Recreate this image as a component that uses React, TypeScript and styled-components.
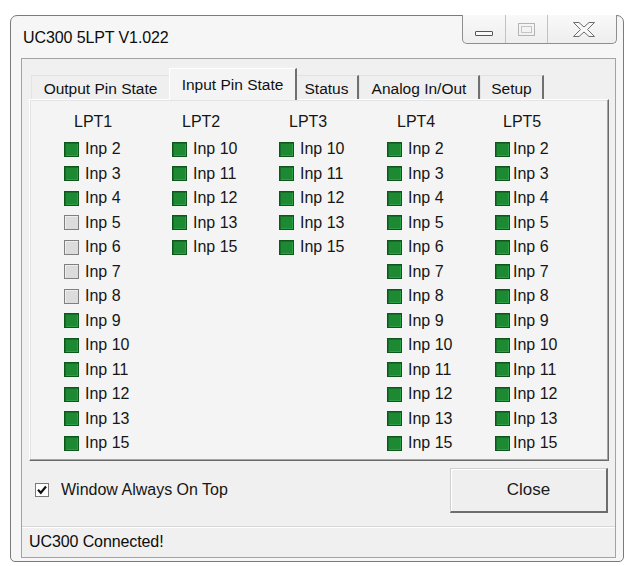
import React from "react";
import styled, { createGlobalStyle } from "styled-components";

const Global = createGlobalStyle`
  html, body {
    margin: 0;
    padding: 0;
    width: 624px;
    height: 566px;
    overflow: hidden;
    background: #ffffff;
  }
  body {
    font-family: "Liberation Sans", Arial, sans-serif;
    color: #111;
  }
`;

const Frame = styled.div`
  margin: 15px 0 0 10px;
  width: 614px;
  height: 547px;
  box-sizing: border-box;
  border: 1px solid #7b7b7b;
  border-radius: 7px 7px 5px 5px;
  background: #f6f6f6;
  padding: 0 0 3px 10px;
  display: flex;
  flex-direction: column;
`;

const TitleBar = styled.div`
  height: 42px;
  display: flex;
  justify-content: space-between;
  align-items: flex-start;
  padding-right: 6px;
`;

const Title = styled.div`
  margin-top: 12px;
  margin-left: 2px;
  font-size: 16px;
  line-height: 20px;
  letter-spacing: -0.1px;
  color: #0c0c0c;
`;

const Caption = styled.div`
  margin-top: -1px;
  height: 29px;
  display: flex;
  box-sizing: border-box;
  border: 1px solid #8e8e8e;
  border-top: none;
  border-radius: 0 0 5px 5px;
  background: linear-gradient(#f9f9f9, #eeeeee);
  overflow: hidden;
`;

const CapButton = styled.div<{ $w: number; $last?: boolean }>`
  width: ${(p) => p.$w}px;
  display: flex;
  align-items: center;
  justify-content: center;
  border-right: ${(p) => (p.$last ? "none" : "1px solid #c2c2c2")};
  box-sizing: border-box;
`;

const MinGlyph = styled.div`
  width: 18px;
  height: 5px;
  margin-top: 9px;
  box-sizing: border-box;
  border: 1px solid #555;
  border-radius: 1px;
  background: #fafafa;
`;

const Client = styled.div`
  width: 595px;
  height: 500px;
  box-sizing: border-box;
  border: 1px solid #a3a3a3;
  background: #f0f0f0;
  display: flex;
  flex-direction: column;
`;

const TabArea = styled.div`
  padding: 9px 6px 0 7px;
`;

const TabStrip = styled.div`
  height: 31px;
  display: flex;
  align-items: flex-end;
  padding-left: 2px;
  position: relative;
  z-index: 1;
`;

const Tab = styled.div<{ $w: number; $active?: boolean }>`
  width: ${(p) => p.$w}px;
  height: ${(p) => (p.$active ? 32 : 24)}px;
  margin: ${(p) => (p.$active ? "0 -2px -1px -2px" : "0")};
  box-sizing: border-box;
  display: flex;
  justify-content: center;
  align-items: center;
  padding-top: ${(p) => (p.$active ? 0 : 2)}px;
  font-size: 15.5px;
  white-space: nowrap;
  color: #111;
  background: ${(p) => (p.$active ? "#f4f4f4" : "#efefef")};
  border-top: 1px solid ${(p) => (p.$active ? "#ffffff" : "#e2e2e2")};
  border-left: 1px solid ${(p) => (p.$active ? "#ffffff" : "#e4e4e4")};
  border-right: 2px solid #707070;
  position: relative;
  z-index: ${(p) => (p.$active ? 2 : 1)};
`;

const Panel = styled.div`
  height: 362px;
  box-sizing: border-box;
  background: #f4f4f4;
  border-top: 1px solid #ffffff;
  border-left: 1px solid #ffffff;
  border-right: 1px solid #6a6a6a;
  border-bottom: 1px solid #6a6a6a;
  box-shadow: inset -1px -1px 0 #a4a4a4, inset 1px 1px 0 #e4e4e4;
  padding: 10px 0 0 34px;
  display: grid;
  grid-template-columns: 108px 107px 108px 108px 1fr;
  align-items: start;
`;

const Column = styled.div`
  display: flex;
  flex-direction: column;
`;

const Header = styled.div<{ $shift: number }>`
  height: 24px;
  line-height: 24px;
  margin-bottom: 3px;
  padding-left: ${(p) => p.$shift}px;
  font-size: 16px;
  color: #161616;
`;

const Row = styled.div<{ $gap: number }>`
  height: 24.5px;
  display: flex;
  align-items: center;
  gap: ${(p) => p.$gap}px;
  font-size: 16px;
  color: #161616;
  white-space: nowrap;
`;

const Led = styled.span<{ $on: boolean }>`
  width: 15px;
  height: 15px;
  box-sizing: border-box;
  flex: none;
  border: 1px solid ${(p) => (p.$on ? "#0e561c" : "#7f7f7f")};
  background: ${(p) => (p.$on ? "#1d8a33" : "#dcdcdc")};
  box-shadow: ${(p) =>
    p.$on
      ? "inset 1px 1px 0 #166f29, inset -1px -1px 0 #2a9f43"
      : "inset 1px 1px 0 #eeeeee"};
`;

const BottomBar = styled.div`
  height: 65px;
  box-sizing: border-box;
  display: flex;
  justify-content: space-between;
  align-items: flex-start;
  padding: 7px 7px 0 13px;
`;

const CheckRow = styled.label`
  margin-top: 13px;
  display: flex;
  align-items: center;
  gap: 12px;
  font-size: 16px;
  color: #161616;
`;

const CheckBox = styled.span`
  width: 14px;
  height: 14px;
  box-sizing: border-box;
  border: 1px solid #7a7a7a;
  background: #ffffff;
  display: flex;
  align-items: center;
  justify-content: center;
`;

const CloseButton = styled.div`
  width: 158px;
  height: 45px;
  box-sizing: border-box;
  display: flex;
  align-items: center;
  justify-content: center;
  font-size: 17px;
  color: #1a1a1a;
  background: #efefef;
  border-top: 1px solid #cfcfcf;
  border-left: 1px solid #cfcfcf;
  border-right: 2px solid #6d6d6d;
  border-bottom: 2px solid #6d6d6d;
  box-shadow: inset 1px 1px 0 #ffffff;
`;

const StatusBar = styled.div`
  height: 31px;
  box-sizing: border-box;
  border-top: 1px solid #d6d6d6;
  box-shadow: inset 0 1px 0 #ffffff;
  display: flex;
  align-items: center;
  padding: 0 0 0 7px;
  font-size: 16px;
  letter-spacing: -0.1px;
  color: #0c0c0c;
`;

type Port = { name: string; pins: [number, boolean][]; shift: number; gap: number };

const on = (list: number[]): [number, boolean][] => list.map((n) => [n, true]);

const ports: Port[] = [
  {
    name: "LPT1",
    shift: 10,
    gap: 6,
    pins: [
      [2, true],
      [3, true],
      [4, true],
      [5, false],
      [6, false],
      [7, false],
      [8, false],
      [9, true],
      [10, true],
      [11, true],
      [12, true],
      [13, true],
      [15, true],
    ],
  },
  { name: "LPT2", shift: 10, gap: 6, pins: on([10, 11, 12, 13, 15]) },
  { name: "LPT3", shift: 10, gap: 6, pins: on([10, 11, 12, 13, 15]) },
  { name: "LPT4", shift: 10, gap: 6, pins: on([2, 3, 4, 5, 6, 7, 8, 9, 10, 11, 12, 13, 15]) },
  { name: "LPT5", shift: 8, gap: 3, pins: on([2, 3, 4, 5, 6, 7, 8, 9, 10, 11, 12, 13, 15]) },
];

const tabs: { label: string; w: number; active?: boolean }[] = [
  { label: "Output Pin State", w: 140 },
  { label: "Input Pin State", w: 128, active: true },
  { label: "Status", w: 64 },
  { label: "Analog In/Out", w: 121 },
  { label: "Setup", w: 64 },
];

export default function App() {
  return (
    <>
      <Global />
      <Frame>
        <TitleBar>
          <Title>UC300 5LPT V1.022</Title>
          <Caption>
            <CapButton $w={43}>
              <MinGlyph />
            </CapButton>
            <CapButton $w={42}>
              <svg width="17" height="13" viewBox="0 0 17 13">
                <rect x="0.5" y="0.5" width="16" height="12" fill="none" stroke="#b4b4b4" />
                <rect x="3.5" y="3.5" width="10" height="6" fill="none" stroke="#c4c4c4" />
              </svg>
            </CapButton>
            <CapButton $w={68} $last>
              <svg width="22" height="15" viewBox="0 0 22 15" style={{ marginLeft: 4 }}>
                <polygon
                  points="0.5,0.5 6,0.5 11,5 16,0.5 21.5,0.5 14.5,7.5 21.5,14.5 16,14.5 11,10 6,14.5 0.5,14.5 7.5,7.5"
                  fill="#f7f7f7"
                  stroke="#6e6e6e"
                  strokeWidth="1"
                  strokeLinejoin="round"
                />
              </svg>
            </CapButton>
          </Caption>
        </TitleBar>
        <Client>
          <TabArea>
            <TabStrip>
              {tabs.map((t) => (
                <Tab key={t.label} $w={t.w} $active={t.active}>
                  {t.label}
                </Tab>
              ))}
            </TabStrip>
            <Panel>
              {ports.map((p) => (
                <Column key={p.name}>
                  <Header $shift={p.shift}>{p.name}</Header>
                  {p.pins.map(([n, lit]) => (
                    <Row key={n} $gap={p.gap}>
                      <Led $on={lit} />
                      <span>Inp {n}</span>
                    </Row>
                  ))}
                </Column>
              ))}
            </Panel>
          </TabArea>
          <BottomBar>
            <CheckRow>
              <CheckBox>
                <svg width="10" height="10" viewBox="0 0 10 10">
                  <path d="M1 4.8 L3.8 7.8 L9 1.5" fill="none" stroke="#111" strokeWidth="2.2" />
                </svg>
              </CheckBox>
              Window Always On Top
            </CheckRow>
            <CloseButton>Close</CloseButton>
          </BottomBar>
          <StatusBar>UC300 Connected!</StatusBar>
        </Client>
      </Frame>
    </>
  );
}
